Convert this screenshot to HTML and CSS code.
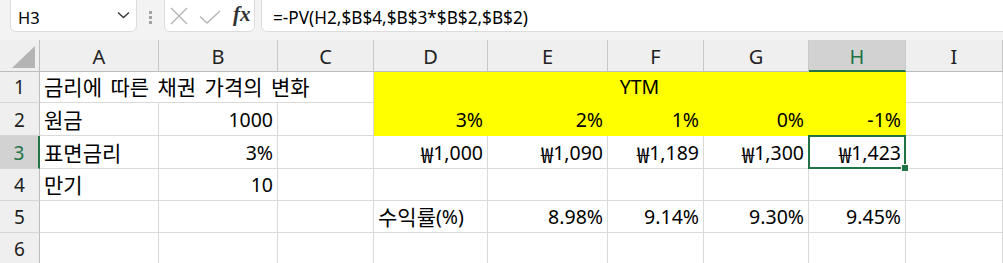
FILE: index.html
```html
<!doctype html>
<html>
  <head>
    <title>채권 가격</title>
    <link rel="stylesheet" href="styles.css">
  </head>
  <body>
    <div class="formula-bar">
      <div class="name-box">
        <span>H3</span>
        <svg class="chevron" width="13" height="8" viewBox="0 0 13 8"><path d="M1 1.5 L6.5 6.5 L12 1.5" fill="none" stroke="#333" stroke-width="1.3"/></svg>
      </div>
      <div class="grip"><i></i><i></i><i></i></div>
      <div class="fx-box">
        <svg width="18" height="18" viewBox="0 0 18 18"><path d="M1 1 L17 17 M17 1 L1 17" stroke="#b4b4b4" stroke-width="1.3"/></svg>
        <svg class="check" width="22" height="14" viewBox="0 0 22 14"><path d="M1 6.5 L8 13 L21 1" fill="none" stroke="#b4b4b4" stroke-width="1.3"/></svg>
        <span class="fx">fx</span>
      </div>
      <div class="formula-input">=-PV(H2,$B$4,$B$3*$B$2,$B$2)</div>
    </div>

    <div class="sheet">
      <div class="corner"><div class="tri"></div></div>
      <div class="hd">A</div>
      <div class="hd">B</div>
      <div class="hd">C</div>
      <div class="hd">D</div>
      <div class="hd">E</div>
      <div class="hd">F</div>
      <div class="hd">G</div>
      <div class="hd hd-sel">H</div>
      <div class="hd">I</div>

      <div class="rh">1</div>
      <div class="c span3"><span class="ko">금리에 따른 채권 가격의 변화</span></div>
      <div class="c yellow span5 center">YTM</div>
      <div class="c"></div>

      <div class="rh">2</div>
      <div class="c"><span class="ko">원금</span></div>
      <div class="c r">1000</div>
      <div class="c"></div>
      <div class="c yellow r">3%</div>
      <div class="c yellow r">2%</div>
      <div class="c yellow r">1%</div>
      <div class="c yellow r">0%</div>
      <div class="c yellow r">-1%</div>
      <div class="c"></div>

      <div class="rh rh-sel">3</div>
      <div class="c"><span class="ko">표면금리</span></div>
      <div class="c r">3%</div>
      <div class="c"></div>
      <div class="c r"><span class="won">₩</span>1,000</div>
      <div class="c r"><span class="won">₩</span>1,090</div>
      <div class="c r"><span class="won">₩</span>1,189</div>
      <div class="c r"><span class="won">₩</span>1,300</div>
      <div class="c r active"><span class="won">₩</span>1,423<div class="sel-box"><div class="handle"></div></div></div>
      <div class="c"></div>

      <div class="rh">4</div>
      <div class="c"><span class="ko">만기</span></div>
      <div class="c r">10</div>
      <div class="c"></div>
      <div class="c"></div>
      <div class="c"></div>
      <div class="c"></div>
      <div class="c"></div>
      <div class="c"></div>
      <div class="c"></div>

      <div class="rh">5</div>
      <div class="c"></div>
      <div class="c"></div>
      <div class="c"></div>
      <div class="c"><span class="ko">수익률</span>(%)</div>
      <div class="c r">8.98%</div>
      <div class="c r">9.14%</div>
      <div class="c r">9.30%</div>
      <div class="c r">9.45%</div>
      <div class="c"></div>

      <div class="rh">6</div>
      <div class="c"></div>
      <div class="c"></div>
      <div class="c"></div>
      <div class="c"></div>
      <div class="c"></div>
      <div class="c"></div>
      <div class="c"></div>
      <div class="c"></div>
      <div class="c"></div>
    </div>
  </body>
</html>
```

FILE: styles.css
```css
body {
  margin: 0;
  padding: 0;
  width: 1003px;
  height: 263px;
  overflow: hidden;
  background-color: #f3f3f3;
  font-family: "Noto Sans", "Noto Sans CJK KR", sans-serif;
  color: #000;
}

/* formula bar */
.formula-bar {
  display: flex;
  align-items: flex-end;
  height: 32px;
  padding-left: 10px;
  overflow: hidden;
}
.name-box,
.fx-box,
.formula-input {
  box-sizing: border-box;
  height: 44px;
  flex-shrink: 0;
  background-color: #fff;
  border: 1px solid #dcdcdc;
  border-radius: 6px;
}
.name-box {
  width: 127px;
  display: flex;
  align-items: flex-end;
  justify-content: space-between;
  padding: 0 6px 3px 7px;
  font-size: 16.5px;
  line-height: 20px;
}
.chevron {
  margin-bottom: 9px;
}
.grip {
  display: flex;
  flex-direction: column;
  gap: 2px;
  width: 3px;
  margin: 0 12px 8px 12px;
}
.grip i {
  display: block;
  width: 3px;
  height: 3px;
  background-color: #a3a3a3;
}
.fx-box {
  width: 91px;
  display: flex;
  align-items: flex-end;
  padding: 0 0 6px 5px;
}
.fx-box svg {
  display: block;
}
.fx-box .check {
  margin: 0 0 1px 11px;
}
.fx {
  font-family: "Liberation Serif", serif;
  font-style: italic;
  font-weight: bold;
  font-size: 21px;
  line-height: 20px;
  color: #333;
  margin: 0 0 1px 12px;
}
.formula-input {
  flex: 1;
  margin: 0 -12px 0 6px;
  display: flex;
  align-items: flex-end;
  padding: 0 0 3px 11px;
  font-size: 17.2px;
  line-height: 20px;
}

/* grid */
.sheet {
  margin-top: 8px;
  display: grid;
  grid-template-columns: 40px 119px 119px 96px 114px 120px 96px 105px 97px 97px;
  grid-template-rows: 32px 31px 33px 33px 32px 32px 32px;
  background-color: #fff;
}
.corner {
  box-sizing: border-box;
  background-color: #efefef;
  border-right: 1px solid #bdbdbd;
  border-bottom: 1px solid #bdbdbd;
  display: flex;
  align-items: flex-end;
  justify-content: flex-end;
  padding: 0 4px 3px 0;
}
.tri {
  width: 23px;
  height: 22px;
  background-color: #b4b4b4;
  clip-path: polygon(100% 0, 100% 100%, 0 100%);
}
.hd {
  box-sizing: border-box;
  background-color: #efefef;
  border-right: 1px solid #c8c8c8;
  border-bottom: 1px solid #bdbdbd;
  display: flex;
  align-items: flex-end;
  justify-content: center;
  padding-bottom: 4px;
  font-size: 20px;
  line-height: 20px;
  color: #222;
}
.hd-sel {
  background-color: #d2d2d2;
  color: #217346;
  border-bottom: 2px solid #217346;
  padding-bottom: 3px;
}
.rh {
  box-sizing: border-box;
  background-color: #efefef;
  border-right: 1px solid #bdbdbd;
  border-bottom: 1px solid #d6d6d6;
  display: flex;
  align-items: flex-end;
  justify-content: center;
  padding-bottom: 5px;
  font-size: 19px;
  line-height: 20px;
  color: #222;
}
.rh-sel {
  background-color: #d2d2d2;
  color: #217346;
  border-right: 2px solid #217346;
}
.c {
  box-sizing: border-box;
  border-right: 1px solid #dadada;
  border-bottom: 1px solid #dadada;
  display: flex;
  align-items: flex-end;
  padding: 0 4px 5px 4px;
  font-size: 19.5px;
  line-height: 20px;
  white-space: nowrap;
  min-width: 0;
}
.c .ko {
  font-size: 21px;
  word-spacing: 3px;
}
.c .won {
  font-family: "Noto Sans CJK KR", sans-serif;
  font-size: 22px;
}
.c.r {
  justify-content: flex-end;
}
.c.center {
  justify-content: center;
}
.span3 {
  grid-column: span 3;
}
.span5 {
  grid-column: span 5;
}
.yellow {
  background-color: #ffff00;
  border-color: #ffff00;
}
.active {
  position: relative;
}
.sel-box {
  position: absolute;
  top: -1px;
  left: -1px;
  right: -1px;
  bottom: -1px;
  border: 2px solid #217346;
}
.handle {
  position: absolute;
  right: -5px;
  bottom: -5px;
  width: 6px;
  height: 6px;
  background-color: #217346;
  border: 1px solid #fff;
}
```
